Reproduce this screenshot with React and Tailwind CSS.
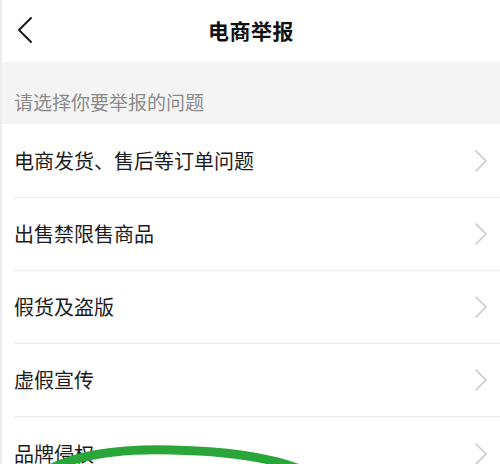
import React from "react";

const items = [
  "电商发货、售后等订单问题",
  "出售禁限售商品",
  "假货及盗版",
  "虚假宣传",
  "品牌侵权",
];

const Chevron = () => (
  <svg width="14" height="24" viewBox="0 0 14 24" fill="none" className="shrink-0">
    <path d="M2 2 L12 12 L2 22" stroke="#c8c8c8" strokeWidth="1.6" strokeLinecap="round" strokeLinejoin="round" />
  </svg>
);

export default function App() {
  return (
    <div
      className="relative w-[500px] h-[464px] overflow-hidden bg-white border-l-2 border-[#ececec]"
      style={{ fontFamily: '"Noto Sans CJK SC", "Noto Sans", sans-serif' }}
    >
      {/* Header */}
      <div className="relative flex items-center justify-center h-[62px]">
        <svg width="18" height="28" viewBox="0 0 18 28" fill="none" className="absolute left-[14px] top-[16px]">
          <path d="M15 2 L3 14 L15 26" stroke="#1a1a1a" strokeWidth="2" strokeLinecap="round" strokeLinejoin="round" />
        </svg>
        <h1 className="text-[21px] font-bold text-[#111] tracking-[0.5px]">电商举报</h1>
      </div>

      {/* Section label */}
      <div className="flex items-center h-[62px] bg-[#f4f4f4] px-[12px] pt-[18px]">
        <span className="text-[19px] text-[#8a8a8a]">请选择你要举报的问题</span>
      </div>

      {/* List */}
      <div className="pl-[12px] pt-[1px]">
        {items.map((t, i) => (
          <div
            key={t}
            className={`flex items-center justify-between h-[73px] pr-[12px] ${
              i < items.length - 1 ? "border-b border-[#ebebeb]" : ""
            }`}
          >
            <span className="text-[20px] text-[#1c1c1c]">{t}</span>
            <Chevron />
          </div>
        ))}
      </div>

      {/* Green marker stroke */}
      <svg
        className="absolute left-0 top-[430px] pointer-events-none"
        width="500"
        height="40"
        viewBox="0 0 500 40"
        fill="none"
      >
        <path
          d="M46 40 C 80 22, 130 19, 170 20 C 220 21, 265 26, 300 40"
          stroke="#2aa53a"
          strokeWidth="9"
          strokeLinecap="round"
        />
      </svg>
    </div>
  );
}
